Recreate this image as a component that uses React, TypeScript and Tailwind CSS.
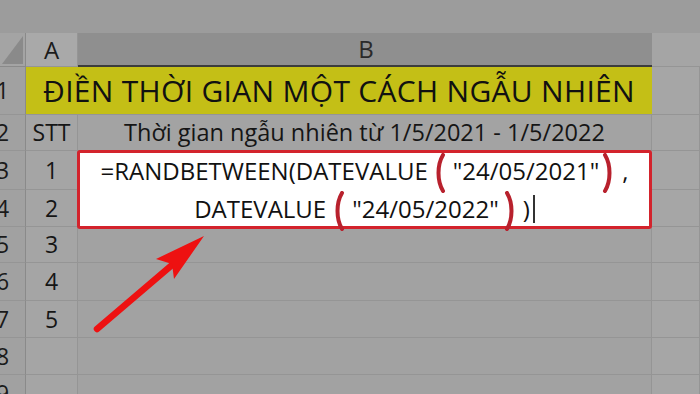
import React from "react";

const font = { fontFamily: '"Open Sans", "Noto Sans", sans-serif' };

function RedParen({ flip = false }: { flip?: boolean }) {
  return (
    <svg
      width="14"
      height="40"
      viewBox="0 0 14 40"
      className="inline-block align-middle -my-[10px] shrink-0"
    >
      <path
        d={flip ? "M4 2 C 10 12, 10 28, 4 38" : "M10 2 C 4 12, 4 28, 10 38"}
        fill="none"
        stroke="#b8212d"
        strokeWidth="4"
        strokeLinecap="round"
      />
    </svg>
  );
}

const line = "border-r border-b border-[#959595]";

function RowHead({ n }: { n: string }) {
  return (
    <div className={`${line} bg-[#a1a1a1] flex items-center overflow-hidden border-r-[#8a8a8a]`}>
      <span className="-ml-[4px] text-[23px] leading-none text-[#1a1a1a]">{n}</span>
    </div>
  );
}

function ACell({ t }: { t?: string }) {
  return (
    <div className={`${line} bg-[#a5a5a5] flex items-center justify-center`}>
      <span className="text-[23px] leading-none text-[#151515]">{t}</span>
    </div>
  );
}

function Empty({ right = false }: { right?: boolean }) {
  return <div className={`${line} ${right ? "bg-[#a6a6a6]" : "bg-[#a2a2a2]"}`} />;
}

export default function App() {
  return (
    <div className="relative w-[700px] h-[394px] overflow-hidden bg-[#a2a2a2]" style={font}>
      <div className="grid grid-cols-[26px_52px_574px_1fr] grid-rows-[33px_34px_48px_36px_39px_37px_36px_38px_37px_37px_37px]">
        {/* top band */}
        <div className="col-span-4 bg-[#9c9c9c]" />

        {/* column headers */}
        <div className="relative bg-[#a4a4a4] border-r border-b border-[#8a8a8a]">
          <svg width="26" height="34" viewBox="0 0 26 34" className="absolute inset-0">
            <polygon points="23,3 23,31 2,31" fill="#8a8a8a" />
          </svg>
        </div>
        <div className="bg-[#a9a9a9] border-r border-b border-[#959595] flex items-center justify-center">
          <span className="text-[24px] leading-none text-[#1b1b1b]">A</span>
        </div>
        <div className="bg-[#8f8f8f] border-b-2 border-[#3c3c3c] flex items-center justify-center">
          <span className="text-[24px] leading-none text-[#2a2a2a] pl-[2px]">B</span>
        </div>
        <div className="bg-[#a5a5a5] border-b border-[#959595]" />

        {/* row 1 */}
        <RowHead n="1" />
        <div className="col-span-2 bg-[#c4bf16] border-b border-[#959595] flex items-center justify-center">
          <span className="text-[30px] leading-none text-[#111] tracking-[0.3px]">
            ĐIỀN THỜI GIAN MỘT CÁCH NGẪU NHIÊN
          </span>
        </div>
        <Empty right />

        {/* row 2 */}
        <RowHead n="2" />
        <ACell t="STT" />
        <div className={`${line} bg-[#a3a3a3] flex items-center justify-center`}>
          <span className="text-[23.5px] leading-none text-[#151515]">
            Thời gian ngẫu nhiên từ 1/5/2021 - 1/5/2022
          </span>
        </div>
        <Empty right />

        {/* row 3 */}
        <RowHead n="3" />
        <ACell t="1" />
        <div className="row-span-2 -ml-[1px] -mt-[1px] -mb-[2px] relative z-10 bg-white border-[3px] border-[#d3232c] rounded-[3px] flex flex-col items-center justify-center text-[24px] leading-[38px] text-[#111]">
          <div className="whitespace-nowrap flex items-center">
            <span>=RANDBETWEEN(DATEVALUE</span>
            <span className="ml-[5px]"><RedParen /></span>
            <span className="ml-[6px]">"24/05/2021"</span>
            <span className="ml-[2px]"><RedParen flip /></span>
            <span className="ml-[7px]">,</span>
          </div>
          <div className="whitespace-nowrap flex items-center">
            <span>DATEVALUE</span>
            <span className="ml-[6px]"><RedParen /></span>
            <span className="ml-[6px]">"24/05/2022"</span>
            <span className="ml-[4px]"><RedParen flip /></span>
            <span className="ml-[6px]">)</span>
            <span className="ml-[3px] inline-block w-[2px] h-[28px] bg-[#333]" />
          </div>
        </div>
        <Empty right />

        {/* row 4 */}
        <RowHead n="4" />
        <ACell t="2" />
        <Empty right />

        {/* rows 5-9 */}
        <RowHead n="5" />
        <ACell t="3" />
        <Empty />
        <Empty right />

        <RowHead n="6" />
        <ACell t="4" />
        <Empty />
        <Empty right />

        <RowHead n="7" />
        <ACell t="5" />
        <Empty />
        <Empty right />

        <RowHead n="8" />
        <ACell />
        <Empty />
        <Empty right />

        <RowHead n="9" />
        <ACell />
        <Empty />
        <Empty right />
      </div>

      {/* red arrow */}
      <svg
        width="700"
        height="394"
        viewBox="0 0 700 394"
        className="absolute inset-0 pointer-events-none z-20"
      >
        <line x1="97" y1="329" x2="172" y2="265" stroke="#ee1111" strokeWidth="6.5" strokeLinecap="round" />
        <polygon points="204,236 174,279 172,264 156,259" fill="#ee1111" />
      </svg>
    </div>
  );
}
